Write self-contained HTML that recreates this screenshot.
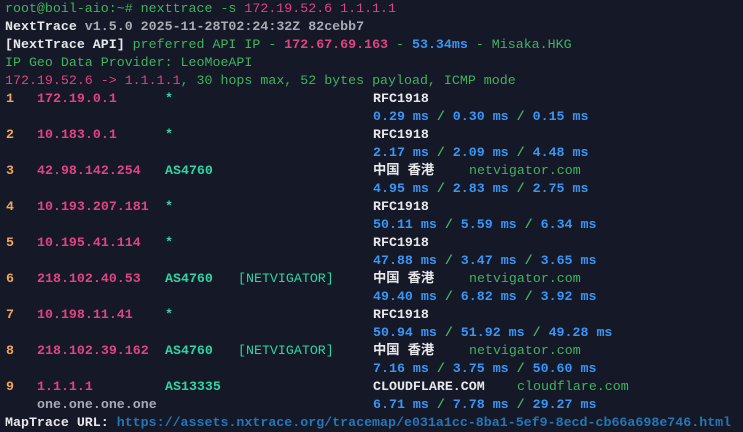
<!DOCTYPE html><html><head><meta charset="utf-8"><style>
body{margin:0;width:743px;height:432px;background:#151827;overflow:hidden;font-family:"Liberation Mono","Noto Sans CJK SC",monospace;font-size:13.3px;}
.l{position:absolute;left:5px;height:18px;line-height:18px;white-space:pre;}
.a{position:absolute;white-space:pre;height:18px;line-height:18px;}
.g{color:#3fb45f}.p{color:#e04482}.w{color:#e8e8ec;font-weight:bold}.gr{color:#a9abb3}
.o{color:#f2a65a;font-weight:bold}.pi{color:#e04482;font-weight:bold}.t{color:#2fd6a3;font-weight:bold}
.b{color:#3a96f5;font-weight:bold}.cj{color:#e8e8ec;font-weight:bold}.u{color:#2377b8;font-weight:bold}
</style></head><body>
<div class="l" style="top:0"><span class="g">root@boil-aio:~# nexttrace -s </span><span class="p">172.19.52.6 1.1.1.1</span></div>
<div class="l" style="top:18px"><span class="w">NextTrace</span><span class="gr" style="font-weight:bold"> v1.5.0 2025-11-28T02:24:32Z 82cebb7</span></div>
<div class="l" style="top:36px"><span class="w">[NextTrace API]</span><span class="g"> preferred API IP - </span><span class="pi">172.67.69.163</span><span class="g"> - </span><span class="b">53.34ms</span><span class="g"> - Misaka.HKG</span></div>
<div class="l" style="top:54px"><span class="g">IP Geo Data Provider: LeoMoeAPI</span></div>
<div class="l" style="top:72px"><span class="p">172.19.52.6 -&gt; 1.1.1.1</span><span class="g">, 30 hops max, 52 bytes payload, ICMP mode</span></div>

<div class="a o" style="left:6px;top:90px">1</div><div class="a pi" style="left:37px;top:90px">172.19.0.1</div><div class="a t" style="left:165px;top:90px">*</div><div class="a w" style="left:373px;top:90px">RFC1918</div>
<div class="a b" style="left:373px;top:108px">0.29 ms <span class="g">/</span> 0.30 ms <span class="g">/</span> 0.15 ms</div>

<div class="a o" style="left:6px;top:126px">2</div><div class="a pi" style="left:37px;top:126px">10.183.0.1</div><div class="a t" style="left:165px;top:126px">*</div><div class="a w" style="left:373px;top:126px">RFC1918</div>
<div class="a b" style="left:373px;top:144px">2.17 ms <span class="g">/</span> 2.09 ms <span class="g">/</span> 4.48 ms</div>

<div class="a o" style="left:6px;top:162px">3</div><div class="a pi" style="left:37px;top:162px">42.98.142.254</div><div class="a t" style="left:165px;top:162px">AS4760</div><div class="a cj" style="left:373px;top:162px">中国 香港</div><div class="a g" style="left:469px;top:162px">netvigator.com</div>
<div class="a b" style="left:373px;top:180px">4.95 ms <span class="g">/</span> 2.83 ms <span class="g">/</span> 2.75 ms</div>

<div class="a o" style="left:6px;top:198px">4</div><div class="a pi" style="left:37px;top:198px">10.193.207.181</div><div class="a t" style="left:165px;top:198px">*</div><div class="a w" style="left:373px;top:198px">RFC1918</div>
<div class="a b" style="left:373px;top:216px">50.11 ms <span class="g">/</span> 5.59 ms <span class="g">/</span> 6.34 ms</div>

<div class="a o" style="left:6px;top:234px">5</div><div class="a pi" style="left:37px;top:234px">10.195.41.114</div><div class="a t" style="left:165px;top:234px">*</div><div class="a w" style="left:373px;top:234px">RFC1918</div>
<div class="a b" style="left:373px;top:252px">47.88 ms <span class="g">/</span> 3.47 ms <span class="g">/</span> 3.65 ms</div>

<div class="a o" style="left:6px;top:270px">6</div><div class="a pi" style="left:37px;top:270px">218.102.40.53</div><div class="a t" style="left:165px;top:270px">AS4760</div><div class="a t" style="left:238px;top:270px;font-weight:normal">[NETVIGATOR]</div><div class="a cj" style="left:373px;top:270px">中国 香港</div><div class="a g" style="left:469px;top:270px">netvigator.com</div>
<div class="a b" style="left:373px;top:288px">49.40 ms <span class="g">/</span> 6.82 ms <span class="g">/</span> 3.92 ms</div>

<div class="a o" style="left:6px;top:306px">7</div><div class="a pi" style="left:37px;top:306px">10.198.11.41</div><div class="a t" style="left:165px;top:306px">*</div><div class="a w" style="left:373px;top:306px">RFC1918</div>
<div class="a b" style="left:373px;top:324px">50.94 ms <span class="g">/</span> 51.92 ms <span class="g">/</span> 49.28 ms</div>

<div class="a o" style="left:6px;top:342px">8</div><div class="a pi" style="left:37px;top:342px">218.102.39.162</div><div class="a t" style="left:165px;top:342px">AS4760</div><div class="a t" style="left:238px;top:342px;font-weight:normal">[NETVIGATOR]</div><div class="a cj" style="left:373px;top:342px">中国 香港</div><div class="a g" style="left:469px;top:342px">netvigator.com</div>
<div class="a b" style="left:373px;top:360px">7.16 ms <span class="g">/</span> 3.75 ms <span class="g">/</span> 50.60 ms</div>

<div class="a o" style="left:6px;top:378px">9</div><div class="a pi" style="left:37px;top:378px">1.1.1.1</div><div class="a t" style="left:165px;top:378px">AS13335</div><div class="a w" style="left:373px;top:378px">CLOUDFLARE.COM</div><div class="a g" style="left:517px;top:378px">cloudflare.com</div>
<div class="a gr" style="left:37px;top:396px;font-weight:bold">one.one.one.one</div><div class="a b" style="left:373px;top:396px">6.71 ms <span class="g">/</span> 7.78 ms <span class="g">/</span> 29.27 ms</div>

<div class="l" style="top:414px"><span class="w">MapTrace URL: </span><span class="u">https://assets.nxtrace.org/tracemap/e031a1cc-8ba1-5ef9-8ecd-cb66a698e746.html</span></div>
</body></html>
